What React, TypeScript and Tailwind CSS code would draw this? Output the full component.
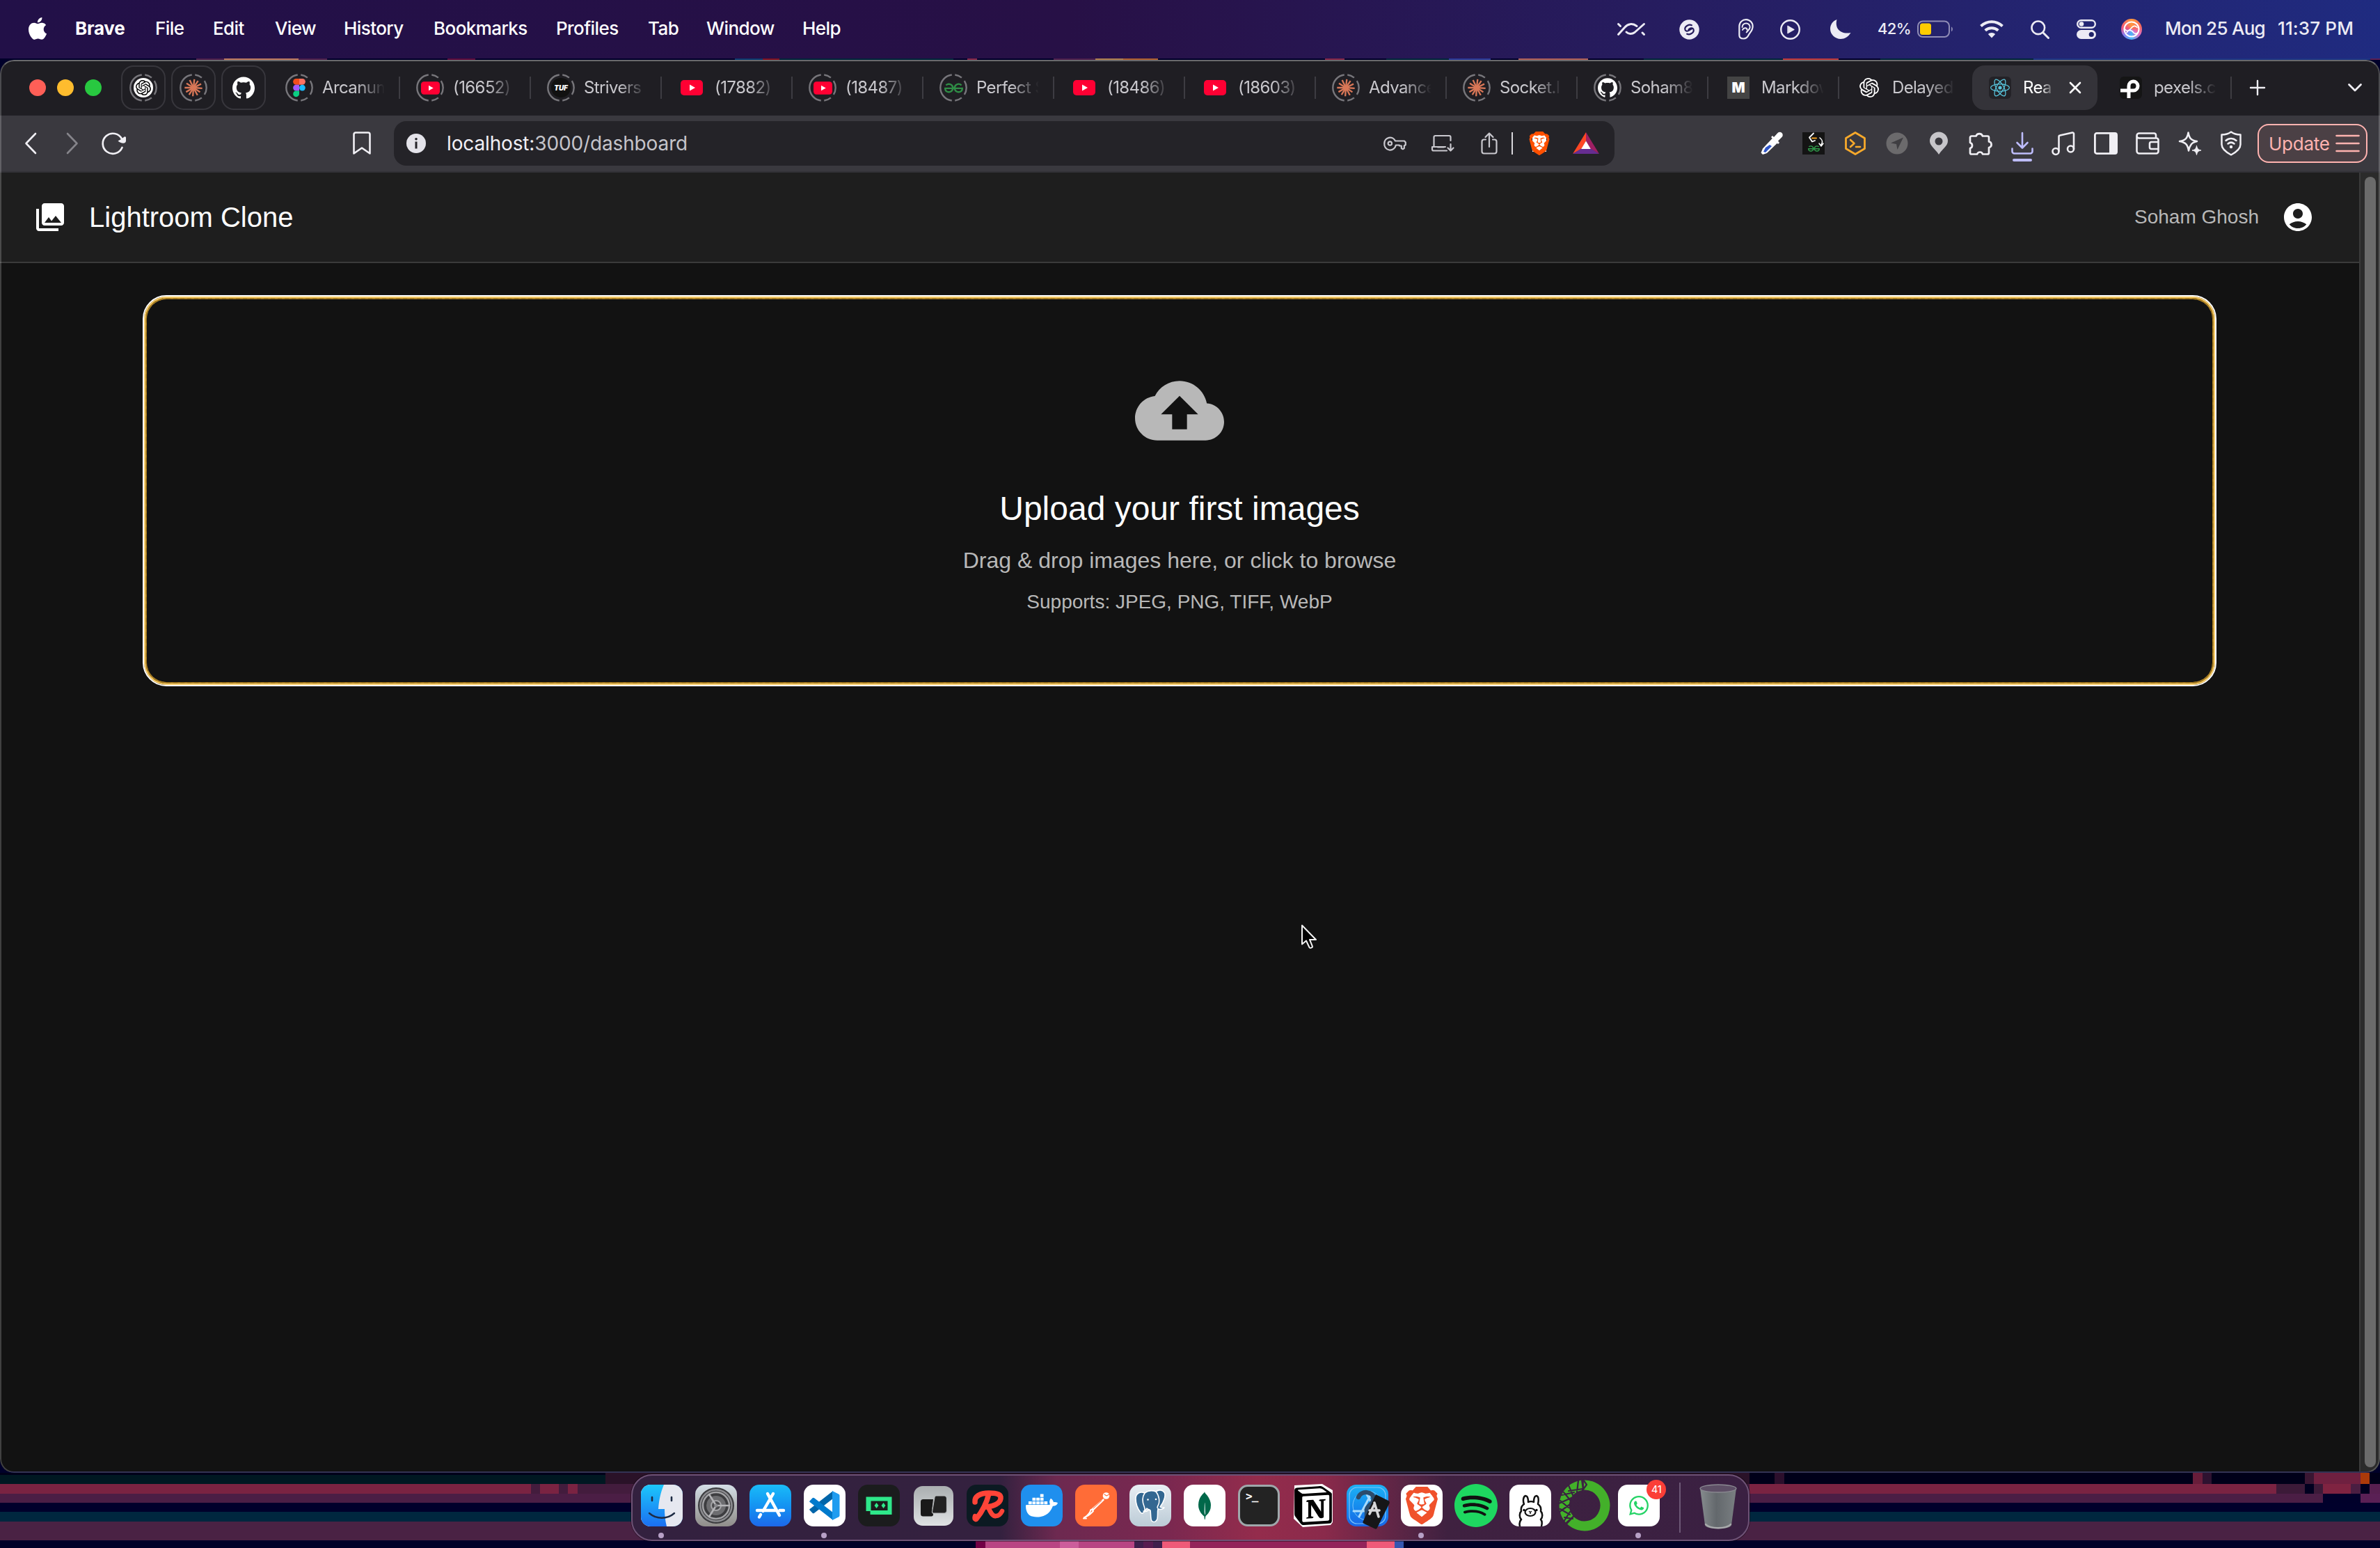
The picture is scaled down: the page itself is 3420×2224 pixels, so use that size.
import type { ReactNode } from "react";
import {
  SiOpenai,
  SiGithub,
  SiBrave,
  SiDocker,
  SiMongodb,
  SiNotion,
  SiSpotify,
  SiWhatsapp,
  SiGeeksforgeeks,
  SiReact,
} from "react-icons/si";

type SvgProps = { box: string; className: string; children: ReactNode };

function Svg({ box, className, children }: SvgProps) {
  return (
    <svg viewBox={box} className={`block shrink-0 overflow-visible ${className}`} fill="none" strokeLinecap="round" strokeLinejoin="round">
      {children}
    </svg>
  );
}

/* ---------- small brand marks ---------- */

function Claude({ className }: { className: string }) {
  const rays = [
    [0, 15], [28, 14.5], [58, 15], [88, 15.5], [118, 14], [146, 15], [178, 15], [206, 14.5], [234, 15], [264, 15.5], [296, 14.5], [328, 15],
  ];
  return (
    <Svg box="-16 -16 32 32" className={className}>
      {rays.map(([a, l]) => (
        <line key={a} x1="0" y1="0" x2="0" y2={-l + 1} transform={`rotate(${a + 6})`} stroke="#d97757" strokeWidth="2.7" strokeLinecap="butt" />
      ))}
    </Svg>
  );
}

function YouTube({ className }: { className: string }) {
  return (
    <Svg box="0 0 32 22" className={className}>
      <rect width="32" height="22" rx="5" fill="#ff0033" />
      <path d="M13 6.5l8 4.5-8 4.5z" fill="#fff" />
    </Svg>
  );
}

function Figma() {
  return (
    <Svg box="0 0 18 26" className="h-[26px] w-[18px]">
      <path d="M4.5 0H9v8.7H4.5a4.35 4.35 0 010-8.7z" fill="#f24e1e" />
      <path d="M9 0h4.5a4.35 4.35 0 010 8.7H9z" fill="#ff7262" />
      <path d="M4.5 8.7H9v8.7H4.5a4.35 4.35 0 010-8.7z" fill="#a259ff" />
      <circle cx="13.4" cy="13.05" r="4.35" fill="#1abcfe" />
      <path d="M4.5 17.4H9v4.3a4.4 4.4 0 11-4.5-4.3z" fill="#0acf83" />
    </Svg>
  );
}

function Ring({ children }: { children: ReactNode }) {
  return (
    <div className="relative flex size-10 shrink-0 items-center justify-center">
      <svg viewBox="0 0 40 40" className="absolute inset-0 size-10" fill="none">
        <circle cx="20" cy="20" r="18.7" stroke="#77767b" strokeWidth="2.4" pathLength="100" strokeDasharray="0 2 9 5 18 5 9 4 46 2" transform="rotate(-90 20 20)" />
      </svg>
      {children}
    </div>
  );
}

/* ---------- menu bar ---------- */

const menus: [string, string][] = [
  ["File", "w-[83px]"],
  ["Edit", "w-[89px]"],
  ["View", "w-[99px]"],
  ["History", "w-[129px]"],
  ["Bookmarks", "w-[176px]"],
  ["Profiles", "w-[132px]"],
  ["Tab", "w-[84px]"],
  ["Window", "w-[138px]"],
  ["Help", "w-[60px]"],
];

function MenuBar() {
  return (
    <div className="flex h-[84px] items-center whitespace-nowrap bg-linear-to-r from-[#221048] via-[#271046] via-45% to-[#1f2b80] text-[26px] tracking-[-0.022em] text-white">
      <Svg box="0 0 814 1000" className="ml-[41px] mb-[3px] h-[32px] w-[26px]">
        <path
          fill="#fff"
          d="M788 341c-6 4-108 62-108 190 0 148 130 200 134 202-1 3-21 71-69 141-43 61-87 123-155 123s-86-40-164-40c-77 0-104 41-166 41s-106-57-156-127C46 790 0 663 0 542c0-194 126-297 251-297 66 0 121 43 163 43 39 0 101-46 176-46 29 0 131 3 198 99zM555 159c31-37 53-88 53-139 0-7-1-14-2-20-50 2-110 34-147 76-28 32-55 83-55 135 0 8 1 16 2 18 3 1 8 1 13 1 45 0 102-30 136-71z"
        />
      </Svg>
      <div className="-mt-[4px] -ml-[1px] flex">
        <span className="ml-[42px] w-[115px] font-bold tracking-[-0.01em]">Brave</span>
        {menus.map(([m, w]) => (
          <span key={m} className={`${w} font-medium`}>
            {m}
          </span>
        ))}
      </div>
      <div className="ml-auto flex w-[1096px] items-center text-[#ecebf4]">
        <Svg box="0 0 40 18" className="h-[18px] w-10">
          <path d="M1.500 16.500L11 6C15 1 22 0 28 4.500M13 13c3 3 8 3.500 12 .5L38.500 1.500M1.500 1.500l3 3M36 14l2.500 2.500" stroke="#ecebf4" strokeWidth="3" />
        </Svg>
        <Svg box="0 0 30 30" className="ml-[49px] size-[29px]">
          <circle cx="15" cy="15" r="14.700" fill="#ecebf4" />
          <path d="M18.500 8.500c-4-2-10 1.500-10 5.500 0 3 3 4.500 6.500 2l4-2.500M11.500 21.500c4 2 10-1.500 10-5.500 0-3-3-4.500-6.500-2l-1 .8" stroke="#231a5a" strokeWidth="2.200" />
        </Svg>
        <Svg box="0 0 22 30" className="ml-[56px] h-[30px] w-[22px]">
          <path d="M1.300 10.500a9.600 9.600 0 0119.300.5c0 6-4 8.500-6 12.500-1.500 3-3 5-7 5-5 0-6.300-2-6.300-5z" stroke="#ecebf4" strokeWidth="2.200" />
          <path d="M5.500 12a5.600 5.600 0 0111.200 0c0 3-3 4.500-5 7.500M6 16c1-3 6-4 6.500-.5" stroke="#ecebf4" strokeWidth="2" />
        </Svg>
        <Svg box="0 0 30 30" className="ml-[38px] size-[29px]">
          <circle cx="15" cy="15" r="13.700" stroke="#ecebf4" strokeWidth="2.500" />
          <path d="M11.500 9.500l9.500 5.500-9.500 5.500z" fill="#ecebf4" stroke="#ecebf4" />
        </Svg>
        <Svg box="0 0 30 28" className="ml-[43px] h-[28px] w-[30px]">
          <path d="M9.500 0C6 13 15 22 29.500 19 26 25 20.500 28 15 28 7 28 0 21.500 0 13.500 0 7 4 2 9.500 0z" fill="#ecebf4" />
        </Svg>
        <span className="-mt-[2px] ml-[38px] w-[57px] text-[22px] font-medium tracking-[-0.03em]">42%</span>
        <Svg box="0 0 52 26" className="h-[26px] w-[52px]">
          <rect x="1" y="1.500" width="45" height="22.500" rx="7" stroke="#8f8cb5" strokeWidth="2" />
          <path d="M49 9.500c2.500.8 2.500 6 0 6.800z" fill="#8f8cb5" />
          <rect x="4" y="4.500" width="16" height="16.500" rx="3.500" fill="#ffcc00" />
        </Svg>
        <Svg box="0 0 36 26" className="ml-[37px] h-[26px] w-9">
          <path d="M2.500 8.500C11.500.2 24.500.2 33.500 8.500M8.700 14.800c5.300-4.900 13.300-4.900 18.600 0" stroke="#ecebf4" strokeWidth="4" strokeLinecap="butt" />
          <path d="M18 25.500l-5.200-5.600c3-2.700 7.400-2.700 10.400 0z" fill="#ecebf4" />
        </Svg>
        <Svg box="0 0 27 27" className="ml-[38px] size-[27px]">
          <circle cx="10.800" cy="10.800" r="9.300" stroke="#ecebf4" strokeWidth="2.600" />
          <path d="M18 18l7.500 7.500" stroke="#ecebf4" strokeWidth="3" />
        </Svg>
        <Svg box="0 0 28 28" className="ml-[39px] size-7">
          <rect x="1.200" y="1.200" width="25.600" height="10.600" rx="5.300" stroke="#ecebf4" strokeWidth="2.400" />
          <circle cx="7" cy="6.500" r="3.300" fill="#ecebf4" />
          <rect y="15" width="28" height="13" rx="6.500" fill="#ecebf4" />
          <circle cx="21.300" cy="21.500" r="3.600" fill="#1f2368" />
        </Svg>
        <div className="ml-9 flex size-[30px] items-center justify-center rounded-full bg-[conic-gradient(#ff9a3c,#f76a5c_20%,#e070c8_35%,#4bb8f8_50%,#8a7cf0_65%,#f0567c_78%,#ff9a3c)]">
          <Svg box="0 0 30 30" className="size-[30px]">
            <circle cx="15" cy="15" r="10.500" stroke="#fff" strokeWidth="2" />
            <path d="M5.500 15c3 4 6 2 9-1.500 3-4 6-4 8.500-1M8 20c3-6 8-3 10 0 2 2 5 2 6.500-1" stroke="#fff" strokeWidth="1.600" />
          </Svg>
        </div>
        <span className="-mt-[4px] ml-[33px] w-[162px] font-medium tracking-[-0.028em]">Mon 25 Aug</span>
        <span className="-mt-[4px] font-medium tracking-[0.005em]">11:37 PM</span>
      </div>
    </div>
  );
}

/* Sliver of wallpaper between the menu bar and the window. */
function WallpaperTop() {
  return (
    <div className="flex h-[2px] bg-[#00002a]">
      <div className="ml-[282px] w-[40px] bg-[#4d1f4c]" />
      <div className="w-[107px] bg-[#c07a60]" />
      <div className="w-[41px] bg-[#4d1f4c]" />
      <div className="ml-[173px] w-[40px] bg-[#5d0a3c]" />
      <div className="ml-[373px] w-[40px] bg-[#0a3a70]" />
      <div className="w-[24px] bg-[#801020]" />
      <div className="w-[250px] bg-[#00263b]" />
      <div className="ml-[20px] w-[14px] bg-[#852548]" />
      <div className="ml-[110px] w-[60px] bg-[#4d1f4c]" />
      <div className="w-[40px] bg-[#b08050]" />
      <div className="w-[50px] bg-[#b06030]" />
      <div className="ml-[240px] w-[28px] bg-[#852548]" />
      <div className="ml-[60px] w-[90px] bg-[#00263b]" />
      <div className="w-[60px] bg-[#2a3a9a]" />
      <div className="ml-[40px] w-[100px] bg-[#b06058]" />
      <div className="ml-[80px] w-[200px] bg-[#00263b]" />
      <div className="w-[80px] bg-[#c0383a]" />
      <div className="ml-[60px] w-[220px] bg-[#00263b]" />
      <div className="flex-1 bg-[#1c3584]" />
      <div className="w-[14px] bg-[#5c2055]" />
    </div>
  );
}

/* ---------- tab strip ---------- */

function Pinned({ children }: { children: ReactNode }) {
  return <div className="flex size-16 shrink-0 items-center justify-center rounded-[18px] border-2 border-[#37363c]">{children}</div>;
}

function Tab({ icon, label, plain }: { icon: ReactNode; label: string; plain?: boolean }) {
  return (
    <div className="flex h-16 w-[188px] shrink-0 items-center">
      <div className="flex w-[86px] justify-center">{icon}</div>
      <div className="-ml-[10px] w-[90px] overflow-hidden whitespace-nowrap text-[24px] tracking-[-0.025em] text-[#c9c8cd] [mask-image:linear-gradient(to_right,#000_55%,transparent_100%)]">
        {label}
      </div>
      {!plain && <div className="ml-auto h-8 w-[2px] bg-[#3d3c42]" />}
    </div>
  );
}

const yt = <YouTube className="h-[22px] w-8" />;
const ytRing = (
  <Ring>
    <YouTube className="h-[19px] w-[27px]" />
  </Ring>
);
const claudeRing = (
  <Ring>
    <Claude className="size-7" />
  </Ring>
);

function TabStrip() {
  return (
    <div className="flex h-20 items-center bg-[#1f1e23]">
      <div className="ml-[42px] flex gap-4">
        <div className="size-6 rounded-full bg-[#ff5f57]" />
        <div className="size-6 rounded-full bg-[#febc2e]" />
        <div className="size-6 rounded-full bg-[#28c840]" />
      </div>
      <div className="mr-[5px] ml-7 flex gap-2">
        <Pinned>
          <Ring>
            <div className="flex size-7 items-center justify-center rounded-full bg-white">
              <SiOpenai className="size-[22px] text-black" />
            </div>
          </Ring>
        </Pinned>
        <Pinned>{claudeRing}</Pinned>
        <Pinned>
          <SiGithub className="size-8 text-white" />
        </Pinned>
      </div>
      <Tab icon={<Ring><Figma /></Ring>} label="Arcanum" />
      <Tab icon={ytRing} label="(16652)" />
      <Tab
        icon={
          <Ring>
            <div className="flex size-7 items-center justify-center rounded-full bg-[#111] text-[10px] font-black italic tracking-[-0.02em] text-white">TUF</div>
          </Ring>
        }
        label="Strivers"
      />
      <Tab icon={yt} label="(17882)" />
      <Tab icon={ytRing} label="(18487)" />
      <Tab icon={<Ring><SiGeeksforgeeks className="size-[27px] text-[#2f8d46]" /></Ring>} label="Perfect S" />
      <Tab icon={yt} label="(18486)" />
      <Tab icon={yt} label="(18603)" />
      <Tab icon={claudeRing} label="Advance" />
      <Tab icon={claudeRing} label="Socket.I" />
      <Tab icon={<Ring><SiGithub className="size-7 text-white" /></Ring>} label="Soham8" />
      <Tab icon={<div className="flex size-8 items-center justify-center bg-[#444] text-[20px] font-black text-white">M</div>} label="Markdow" />
      <Tab icon={<SiOpenai className="size-7 text-white" />} label="Delayed" plain />
      <div className="mr-[5px] ml-[3px] flex h-16 w-[180px] shrink-0 items-center rounded-[18px] bg-[#343339]">
        <div className="ml-6 flex size-8 items-center justify-center rounded-md bg-[#232227]">
          <SiReact className="size-[28px] text-[#58c4dc]" />
        </div>
        <div className="ml-[17px] w-[43px] overflow-hidden text-[24px] tracking-[-0.025em] text-white [mask-image:linear-gradient(to_right,#000_60%,transparent_105%)]">Rea</div>
        <Svg box="0 0 16 16" className="ml-[24px] size-4">
          <path d="M1 1l14 14M15 1L1 15" stroke="#fff" strokeWidth="2.600" />
        </Svg>
      </div>
      <Tab
        icon={
          <div className="flex size-8 items-center justify-center rounded-md bg-[#151515]">
            <Svg box="0 0 32 32" className="size-8">
              <path d="M13 31V13.500a6.500 6.500 0 117 6.500H1" stroke="#fff" strokeWidth="5" strokeLinecap="butt" strokeLinejoin="miter" />
            </Svg>
          </div>
        }
        label="pexels.co"
      />
      <Svg box="0 0 22 22" className="ml-[26px] size-[22px]">
        <path d="M11 1v20M1 11h20" stroke="#eeedf2" strokeWidth="2.400" />
      </Svg>
      <Svg box="0 0 20 12" className="ml-[119px] h-3 w-5">
        <path d="M1.500 1.500L10 10l8.500-8.500" stroke="#eeedf2" strokeWidth="2.800" />
      </Svg>
    </div>
  );
}

/* ---------- toolbar ---------- */

function Toolbar() {
  return (
    <div className="flex h-20 items-center bg-[#3a393f]">
      <Svg box="0 0 16 30" className="ml-9 h-[30px] w-4">
        <path d="M15 1L1.500 15 15 29" stroke="#f0eff4" strokeWidth="2.600" />
      </Svg>
      <Svg box="0 0 16 30" className="ml-11 h-[30px] w-4">
        <path d="M1 1l13.500 14L1 29" stroke="#85848a" strokeWidth="2.600" />
      </Svg>
      <Svg box="0 0 34 32" className="ml-[35px] h-8 w-[34px]">
        <path d="M28.500 22A14.500 14.500 0 1128 9.500" stroke="#f0eff4" strokeWidth="2.700" />
        <path d="M22.500 12.500c3 3 11 5.500 11.500 0V7.500c-1-2.500-3-1-6 2z" fill="#f0eff4" />
      </Svg>
      <Svg box="0 0 26 34" className="ml-[326px] h-[34px] w-[26px]">
        <path d="M1.500 4a2.500 2.500 0 012.500-2.500h18A2.500 2.500 0 0124.500 4v27.500L13 23.500 1.500 31.500z" stroke="#f0eff4" strokeWidth="2.600" />
      </Svg>
      <div className="ml-[33px] flex h-16 w-[1754px] shrink-0 items-center rounded-[18px] bg-[#242328] pr-[22px]">
        <div className="ml-[18px] flex size-7 items-center justify-center rounded-full bg-[#e4e3ea]">
          <Svg box="0 0 6 16" className="h-4 w-1.5">
            <rect x="1.500" y="5.500" width="3" height="10" fill="#242328" />
            <circle cx="3" cy="1.700" r="1.800" fill="#242328" />
          </Svg>
        </div>
        <div className="ml-[30px] text-[28px] tracking-[-0.005em] text-[#c5c4ca]">
          <span className="text-[#f1f0f5]">localhost:</span>3000/dashboard
        </div>
        <div className="ml-auto flex items-center">
          <Svg box="0 0 33 20" className="h-5 w-[33px]">
            <path d="M17 6.500h13l1.800 2V12l-2 1.500V17l-2 1.200-2-1.200v-3.500h-3V12.500h-5A8.200 8.200 0 111.300 10 8.200 8.200 0 0117 6.500z" stroke="#c9c8ce" strokeWidth="2.200" />
            <circle cx="9.300" cy="10" r="2.700" stroke="#c9c8ce" strokeWidth="2.200" />
          </Svg>
          <Svg box="0 0 33 24" className="ml-9 h-6 w-[33px]">
            <path d="M27.500 8V3a2 2 0 00-2-2H5.500a2 2 0 00-2 2v14H20M3.500 17H1v3.500a2 2 0 002 2h19M9 17.500h9M27.500 13v9M23.500 18.500l4 4 4-4" stroke="#c9c8ce" strokeWidth="2.200" />
          </Svg>
          <Svg box="0 0 24 32" className="ml-[38px] h-8 w-6">
            <path d="M7 10.500H4.500a3 3 0 00-3 3v14a3 3 0 003 3h15a3 3 0 003-3v-14a3 3 0 00-3-3H17M12 21V1.500M6.500 7L12 1.500 17.500 7" stroke="#c9c8ce" strokeWidth="2.200" />
          </Svg>
          <div className="ml-5 h-8 w-[2px] bg-[#d8d7dc]" />
          <div className="relative ml-[21px] flex h-9 w-[34px] items-center justify-center">
            <div className="absolute h-6 w-5 bg-white" />
            <SiBrave className="relative size-9 text-[#ff5000]" />
          </div>
          <Svg box="0 0 38 32" className="ml-[31px] h-8 w-[38px]">
            <path d="M19 0v12.500l-6 11L0 31z" fill="#ff4724" />
            <path d="M19 0v12.500l6 11L38 31z" fill="#9e1f63" />
            <path d="M0 31h38l-12-7.500H12z" fill="#662d91" />
            <path d="M19 12.500l-6.800 11.500h13.600z" fill="#fff" />
          </Svg>
        </div>
      </div>

      <Svg box="0 0 32 32" className="ml-[210px] size-8">
        <path d="M17 8.500l7 7L9 30l-6 2-2.500-2.500L3 23.500z" fill="#fff" />
        <path d="M7 22l6-4 3 2-9 9-3-1z" fill="#2f55c8" />
        <path d="M15 7l10 10 2-2-2-2.500 5.500-5.500a4 4 0 00-6-6L19 7l-2-2z" fill="#fff" />
      </Svg>
      <div className="ml-7 flex size-8 flex-col items-center bg-[#141414]">
        <Svg box="0 0 32 17" className="h-[17px] w-8">
          <path d="M16 1.500l-6 6 4 6 4-1.500" stroke="#fff" strokeWidth="1.800" />
          <path d="M14 8.500h6" stroke="#f0a020" strokeWidth="2" />
          <path d="M25 8c4 3 4 7 2 10M24 16l3 4 3-4" stroke="#fff" strokeWidth="1.500" />
        </Svg>
        <SiGeeksforgeeks className="size-[19px] -mt-[2px] text-[#2f9d4a]" />
      </div>
      <Svg box="0 0 34 36" className="ml-[27px] h-9 w-[34px]">
        <path d="M17 2.500l13.500 8v15L17 33.500l-13.500-8v-15z" stroke="#f7a92b" strokeWidth="2.800" />
        <path d="M10 13l5.500 5-5.500 5M18 23h6" stroke="#f7a92b" strokeWidth="2.600" />
      </Svg>
      <Svg box="0 0 32 32" className="ml-[27px] size-8">
        <circle cx="16" cy="16" r="15.500" fill="#6b6a6c" />
        <path d="M25 7.500L7 15.500l8 1.500 1.500 8z" fill="#3f3e42" />
      </Svg>
      <Svg box="0 0 28 32" className="ml-[30px] h-8 w-7">
        <path d="M14 32C8 23 1 19.500 1 12.500a13 13 0 0126 0C27 19.500 20 23 14 32z" fill="#c6c5c9" />
        <circle cx="14" cy="13" r="5.500" fill="#3a393f" />
      </Svg>
      <Svg box="0 0 36 34" className="ml-7 h-[34px] w-9">
        <path d="M11.500 6.500a5 5 0 019.500 0H28a2 2 0 012 2v6c4.500.5 5 7.500 0 8.500v7.500a2 2 0 01-2 2h-7c-1-4-6.500-4-8 0H5a2 2 0 01-2-2V24c4-1 4-7 0-8V8.500a2 2 0 012-2z" stroke="#f0eff4" strokeWidth="2.700" />
      </Svg>
      <div className="relative ml-[26px] size-8">
        <Svg box="0 0 32 32" className="size-8">
          <path d="M16 1v21M8.500 15l7.500 7.500 7.500-7.500M1.500 23.500v4a3 3 0 003 3h23a3 3 0 003-3v-4" stroke="#bdbcfb" strokeWidth="2.600" />
        </Svg>
        <div className="absolute top-[38px] left-[2px] h-1 w-7 rounded-full bg-[#bdbcfb]" />
      </div>
      <Svg box="0 0 36 36" className="ml-[26px] size-9">
        <ellipse cx="6" cy="29.500" rx="4.500" ry="4.500" stroke="#f0eff4" strokeWidth="2.600" />
        <ellipse cx="27.500" cy="26" rx="4.500" ry="4.500" stroke="#f0eff4" strokeWidth="2.600" />
        <path d="M10.500 29V8.500a2 2 0 011.700-2L30 2.500a1.700 1.700 0 012 1.700V26" stroke="#f0eff4" strokeWidth="2.600" />
      </Svg>
      <Svg box="0 0 34 32" className="ml-[25px] h-8 w-[34px]">
        <rect x="1.400" y="1.400" width="31.200" height="29.200" rx="2.500" stroke="#f0eff4" strokeWidth="2.800" />
        <rect x="22" y="1.500" width="10.500" height="29" fill="#f0eff4" />
      </Svg>
      <Svg box="0 0 34 32" className="ml-[26px] h-8 w-[34px]">
        <path d="M29 8.500V4a2.500 2.500 0 00-2.500-2.500H5a3.500 3.500 0 000 7h24.500A3 3 0 0132.500 11v16.500a3 3 0 01-3 3H5a3.500 3.500 0 01-3.500-3.500V5M32 14H22.500a2.500 2.500 0 00-2.500 2.500v5a2.500 2.500 0 002.500 2.500H32" stroke="#f0eff4" strokeWidth="2.600" />
      </Svg>
      <Svg box="0 0 36 36" className="ml-[26px] size-9">
        <path d="M15.500 2.500c1.500 8.500 4 11 12.500 12.500-5 1.500-6 1.500-8 4s-3 5-4 9.500c-1.500-9-4.500-12-13-13.500 8.500-1.500 11-4 12.500-12.500z" stroke="#f0eff4" strokeWidth="2.500" />
        <path d="M27.500 21.500c1 4.500 2 5.500 6.500 6.500-4.500 1-5.500 2-6.500 6.500-1-4.500-2-5.500-6.500-6.500 4.500-1 5.500-2 6.500-6.500z" fill="#f0eff4" stroke="#f0eff4" strokeWidth="1" />
      </Svg>
      <Svg box="0 0 30 36" className="ml-[26px] h-9 w-[30px]">
        <path d="M15 1.500c4 3 8 4 13.500 4v14c0 7-7 11.500-13.500 15C8.500 31 1.500 26.500 1.500 19.500v-14C7 5.500 11 4.500 15 1.500z" stroke="#f0eff4" strokeWidth="2.500" />
        <path d="M7.500 14c4.500-4 10.500-4 15 0M10.500 18.500c3-2.500 6-2.500 9 0" stroke="#f0eff4" strokeWidth="2.500" />
        <circle cx="15" cy="23" r="2.200" fill="#f0eff4" />
      </Svg>
      <div className="ml-[23px] flex h-14 w-[158px] shrink-0 items-center rounded-[16px] border-2 border-[#ffb3b0] bg-[#4b4045]">
        <span className="ml-[14px] w-[96px] text-[26px] tracking-[-0.01em] text-[#ffb3b0]">Update</span>
        <Svg box="0 0 35 26" className="h-[26px] w-[35px]">
          <path d="M1.500 2h32M1.500 13h32M1.500 24h32" stroke="#ffb3b0" strokeWidth="2.600" />
        </Svg>
      </div>
    </div>
  );
}

/* ---------- web page ---------- */

function Page() {
  return (
    <div className="flex h-[1866px] bg-[#121212] font-['Liberation_Sans',Arial,sans-serif]">
      <div className="flex w-[3390px] flex-col">
        <header className="flex h-[130px] shrink-0 items-center border-b-2 border-[#3a3a3a] bg-[#1e1e1e] pr-16 pl-12 text-white">
          <Svg box="0 0 24 24" className="size-12">
            <path fill="#fff" d="M22 16V4c0-1.100-.9-2-2-2H8c-1.100 0-2 .9-2 2v12c0 1.100.9 2 2 2h12c1.100 0 2-.9 2-2zm-11-4l2.030 2.710L16 11l4 5H8l3-4zM2 6v14c0 1.100.9 2 2 2h14v-2H4V6H2z" />
          </Svg>
          <h1 className="ml-8 text-[40px]">Lightroom Clone</h1>
          <span className="ml-auto text-[28px] text-[#b8b8b8]">Soham Ghosh</span>
          <Svg box="0 0 24 24" className="ml-8 size-12">
            <path
              fill="#fff"
              d="M12 2C6.480 2 2 6.480 2 12s4.480 10 10 10 10-4.480 10-10S17.520 2 12 2zm0 4c1.930 0 3.500 1.570 3.500 3.500S13.930 13 12 13s-3.500-1.570-3.500-3.500S10.070 6 12 6zm0 14c-2.030 0-4.430-.82-6.140-2.880C7.550 15.800 9.680 15 12 15s4.450.8 6.140 2.120C16.430 19.180 14.030 20 12 20z"
            />
          </Svg>
        </header>
        <main className="mt-[46px] flex justify-center">
          <section className="relative flex h-[562px] w-[2980px] flex-col items-center rounded-[34px] border-2 border-white shadow-[inset_0_0_0_2px_#f9cf6e,inset_0_0_0_4px_#b08428]">
            <div className="absolute inset-[2px] rounded-[30px] border-2 border-dashed border-[#a37a20]" />
            <Svg box="0 0 24 24" className="mt-[100px] size-32">
              <path fill="#b8b8b8" d="M19.350 10.040C18.670 6.590 15.640 4 12 4 9.110 4 6.600 5.640 5.350 8.040 2.340 8.360 0 10.910 0 14c0 3.310 2.690 6 6 6h13c2.760 0 5-2.240 5-5 0-2.640-2.050-4.780-4.650-4.960zM14 13v4h-4v-4H7l5-5 5 5h-3z" />
            </Svg>
            <h2 className="mt-[45px] text-[48px] leading-[64px] text-white">Upload your first images</h2>
            <p className="mt-[18px] text-[32px] leading-[48px] text-[#b8b8b8]">Drag &amp; drop images here, or click to browse</p>
            <p className="mt-4 text-[28px] leading-10 text-[#b8b8b8]">Supports: JPEG, PNG, TIFF, WebP</p>
          </section>
        </main>
      </div>
      <div className="flex w-[30px] justify-center border-l-2 border-[#3b3b3b] bg-[#2b2b2b] pt-[6px]">
        <div className="h-[1854px] w-4 rounded-full bg-[#6b6b6b]" />
      </div>
    </div>
  );
}

/* ---------- wallpaper below the window ---------- */

function WallpaperBottom() {
  return (
    <div className="flex h-[108px] flex-col">
      <div className="flex h-[16px] bg-[#000019]">
        <div className="mt-[3px] w-[870px] bg-[#001822]" />
        <div className="w-[1644px] bg-[#2a1228]" />
        <div className="ml-9 w-[14px] bg-[#2c0f2c]" />
        <div className="ml-[587px] w-[14px] bg-[#681d3a]" />
        <div className="w-[13px] bg-[#2e1230]" />
        <div className="ml-[134px] w-[13px] bg-[#3a1632]" />
        <div className="w-[67px] bg-[#6f2040]" />
        <div className="w-[13px] bg-[#ab3a0a]" />
      </div>
      <div className="flex h-[14px] bg-[#00001f]">
        <div className="w-[763px] bg-[#7a2342]" />
        <div className="w-[13px] bg-[#431c3d]" />
        <div className="w-[27px] bg-[#7a2342]" />
        <div className="w-[13px] bg-[#431c3d]" />
        <div className="w-[14px] bg-[#7a2342]" />
        <div className="w-[1684px] bg-[#431c3d]" />
        <div className="w-[757px] bg-[#7a2342]" />
        <div className="w-[41px] bg-[#3c1a38]" />
        <div className="ml-[13px] w-[13px] bg-[#3c1a38]" />
        <div className="w-[40px] bg-[#7f2341]" />
        <div className="w-[14px] bg-[#4a1e42]" />
        <div className="ml-[13px] flex-1 bg-[#571f50]" />
      </div>
      <div className="flex h-[13px] justify-between bg-[#00002a]">
        <div className="w-[3338px] bg-[#4b1e45]" />
        <div className="w-7 bg-[#5a2055]" />
      </div>
      <div className="h-[13px] bg-[#00002b]" />
      <div className="h-[14px] bg-[#00273f]" />
      <div className="h-[27px] bg-[#4a2244]" />
      <div className="flex h-[11px] bg-[#000028]">
        <div className="ml-[1402px] w-[14px] bg-[#720045]" />
        <div className="w-[107px] bg-[#b84583]" />
        <div className="w-[27px] bg-[#cc5d9b]" />
        <div className="w-[80px] bg-[#b84583]" />
        <div className="w-[13px] bg-[#3f1f4c]" />
        <div className="w-[14px] bg-[#571c50]" />
        <div className="w-[13px] bg-[#3f1f4c]" />
        <div className="w-[40px] bg-[#ef5a78]" />
        <div className="w-[254px] bg-[#93235a]" />
        <div className="w-[40px] bg-[#ef5a78]" />
        <div className="w-[13px] bg-[#3556b0]" />
      </div>
    </div>
  );
}

/* ---------- dock ---------- */

function App60({ bg, children, running }: { bg: string; children?: ReactNode; running?: boolean }) {
  return (
    <div className="relative size-[60px] shrink-0">
      <div className={`flex size-[60px] items-center justify-center overflow-hidden rounded-[14px] ${bg}`}>{children}</div>
      {running && <div className="absolute top-[69px] left-[25px] size-2 rounded-full bg-[#b7a0c6]" />}
    </div>
  );
}

function Finder() {
  return (
    <Svg box="0 0 60 60" className="size-[60px]">
      <rect width="60" height="60" fill="#e6e8f0" />
      <path d="M0 0h33c-5 12-7 22-8 35h9c0 9 1 17 3 25H0z" fill="url(#finderBlue)" />
      <path d="M16 18v5M44 18v5" stroke="#1d2b44" strokeWidth="2.600" />
      <path d="M12 41c10 9 26 9 36 0" stroke="#1d2b44" strokeWidth="2.400" />
      <defs>
        <linearGradient id="finderBlue" x1="0" y1="0" x2="0" y2="1">
          <stop stopColor="#1cc7fb" />
          <stop offset="1" stopColor="#1b6ff2" />
        </linearGradient>
      </defs>
    </Svg>
  );
}

function Settings() {
  return (
    <Svg box="0 0 60 60" className="size-[60px]">
      <circle cx="30" cy="30" r="26" fill="#3d3d40" />
      <circle cx="30" cy="30" r="22.500" stroke="#8b8b8f" strokeWidth="2.600" strokeDasharray="1.500 1" />
      <circle cx="30" cy="30" r="19" stroke="#a3a3a6" strokeWidth="2.500" />
      <circle cx="30" cy="30" r="14" fill="#6d6d70" />
      <circle cx="30" cy="30" r="7" fill="#4a4a4d" stroke="#a3a3a6" strokeWidth="2" />
      <path d="M33 30h16M28.500 27.500L20 14M28.500 32.500L20 46" stroke="#b4b4b7" strokeWidth="2.600" />
      <circle cx="30" cy="30" r="2.600" fill="#8a8a8e" />
    </Svg>
  );
}

function AppStore() {
  return (
    <Svg box="0 0 60 60" className="size-[60px]">
      <path d="M26 13l17 31M34 13L19.500 38M11 37h26M43.500 37H49M16 43l-2 3.500" stroke="#fff" strokeWidth="4.400" />
    </Svg>
  );
}

function VsCode() {
  return (
    <Svg box="0 0 60 60" className="size-[60px]">
      <path d="M8.500 36.500l4 4.200c.8.700 1.800.7 2.600 0L42 20V9L10 34c-2 1-2 1.800-1.500 2.500z" fill="#0065a9" />
      <path d="M8.500 23.500l4-4.200c.8-.7 1.800-.7 2.600 0L42 40v11L10 26c-2-1-2-1.800-1.500-2.500z" fill="#007acc" />
      <path d="M41 9l9 4.500c1 .5 1.500 1.300 1.500 2.500v28c0 1.200-.5 2-1.500 2.500L41 51z" fill="#1f9cf0" />
    </Svg>
  );
}

function RedBrush() {
  return (
    <Svg box="0 0 60 60" className="size-[60px]">
      <path d="M12 25c-1-8 7-13 20-13 12 0 18 2 17 8-1 7-10 11-20 12M32 13c-3 12-8 24-18 36" stroke="#ff4438" strokeWidth="7.500" />
      <path d="M31 32c3 8 7 14 11 13 4 0 7-3 9-7M12 45c-1 3-1 4 1 5" stroke="#ff4438" strokeWidth="6.500" />
    </Svg>
  );
}

function Elephant() {
  return (
    <Svg box="0 0 60 60" className="size-[60px]">
      <path
        d="M22 12c-7-3-13 1-13 8 0 7 3 15 7 20 2 2 4 1 5-1l4-5c2 2 4 2 5 3 1 5 0 12 2 15 3 3 7 1 8-3 1-5 0-10 1-14 4 1 8 0 9-2-3 0-5 0-6-1 5-6 9-17 6-21-3-4-8-4-12-1-5-2-11-2-16 2z"
        fill="#336791"
        stroke="#fff"
        strokeWidth="1.600"
      />
      <path d="M22 12c-4 6-3 14-1 19 1 3 2 5 0 8M38 10c5 6 6 15 3 20-1 3-2 3 0 4M28 36c-2 2-5 3-8 2" stroke="#fff" strokeWidth="1.600" />
      <circle cx="26.500" cy="21.500" r="1.300" fill="#fff" />
      <circle cx="38" cy="21" r="1.300" fill="#fff" />
    </Svg>
  );
}

function Postman() {
  return (
    <Svg box="0 0 60 60" className="size-[60px]">
      <circle cx="44.500" cy="16" r="4.800" fill="#fff" />
      <path d="M40.500 20L23 35c0 2 1 3 2.500 3L42 22z" fill="#fff" />
      <path d="M38 23L26 34" stroke="#ff6c37" strokeWidth="1" />
      <path d="M22.500 36c-1 4-4 8-9 11M26 38c-3 3-6 7-13 9M12 48.500h4" stroke="#fff" strokeWidth="2" />
      <path d="M42 14l3 2 4-2" stroke="#ff6c37" strokeWidth="1.200" />
    </Svg>
  );
}

function Ollama() {
  return (
    <Svg box="0 0 60 60" className="size-[60px]">
      <path d="M15 60c-1-4 0-8 2-10-3-3-3-9 0-12-1-5 1-8 4-10-2-5-1-11 2-12 3 0 4 5 4 9 2-1 6-1 8 0 0-4 1-9 4-9 3 1 3 7 2 12 3 2 5 5 4 10 3 3 3 9 0 12 2 2 2 6 1 10" stroke="#111" strokeWidth="2.500" />
      <ellipse cx="30" cy="39.500" rx="7.500" ry="5.500" stroke="#111" strokeWidth="2.200" />
      <path d="M28.500 38.500l1.500 1 1.500-1M30 39.500v2" stroke="#111" strokeWidth="1.500" />
      <circle cx="21" cy="36.500" r="1.700" fill="#111" />
      <circle cx="39" cy="36.500" r="1.700" fill="#111" />
    </Svg>
  );
}

function Anaconda() {
  return (
    <div className="relative size-[60px] shrink-0">
      <Svg box="0 0 74 74" className="absolute -top-[7px] -left-[7px] size-[74px]">
        <path d="M36 7.500A29.500 29.500 0 1117 58.700" stroke="#43b02a" strokeWidth="14" strokeLinecap="butt" />
        <path d="M33 7.800A29.500 29.500 0 0015 56.500" stroke="#43b02a" strokeWidth="14" strokeLinecap="butt" />
        <path d="M35 0l5 7-6 8M28 1l-2 17M34 13L14 16M14 8l6 14M22 18L4 22M7 18l10 12M18 26L0 34M2 30l12 10M15 36L1 46M2 42l14 8M16 46L7 60M20 56l-12-2" stroke="#3a2042" strokeWidth="2.200" />
      </Svg>
    </div>
  );
}

function Trash() {
  return (
    <Svg box="0 0 54 66" className="-mt-px ml-[27px] h-[66px] w-[54px]">
      <path d="M1 6l7 53c1 7 37 7 38 0l7-53z" fill="url(#bin)" />
      <ellipse cx="27" cy="6.500" rx="26" ry="5.500" fill="#5e4f66" stroke="#8b8a92" strokeWidth="1.300" />
      <path d="M9 58c6 7 30 7 36 0" stroke="#a9aaac" strokeWidth="2.500" />
      <defs>
        <linearGradient id="bin">
          <stop stopColor="#868b8e" />
          <stop offset=".45" stopColor="#63686c" />
          <stop offset="1" stopColor="#7a7f82" />
        </linearGradient>
      </defs>
    </Svg>
  );
}

function Dock() {
  return (
    <div className="absolute top-[2118px] left-[907px] flex h-24 w-[1607px] rounded-[30px] border-2 border-[#6e5276] bg-[linear-gradient(to_right,#33213f_0%,#34213f_33%,#6d2950_38%,#7a2850_48%,#942c4c_56%,#8a2a4b_62%,#5a2545_69%,#3f2140_73%,#3a2042_100%)] pt-[13px] pl-3 shadow-[0_0_0_1px_rgba(0,0,0,0.4)]">
      <div className="flex gap-[18px]">
        <App60 bg="bg-[#1ea0f5]" running><Finder /></App60>
        <App60 bg="bg-linear-to-b from-[#d5dfe7] to-[#908d8a]"><Settings /></App60>
        <App60 bg="bg-linear-to-b from-[#1bbcf8] to-[#1d68ea]"><AppStore /></App60>
        <App60 bg="bg-white" running><VsCode /></App60>
        <App60 bg="bg-[#1b1c1d]">
          <Svg box="0 0 60 60" className="size-[60px]">
            <path d="M11.500 17.500h37v25.500h-31v-5h-6z" fill="#2ee88a" />
            <rect x="18.500" y="23.500" width="24" height="13.500" fill="#1b1c1d" />
            <path d="M26.500 26l3 4-3 4-3-4zM36.500 26l3 4-3 4-3-4z" fill="#2ee88a" />
          </Svg>
        </App60>
        <App60 bg="">
          <div className="flex h-[57px] w-[57px] items-center justify-center rounded-[13px] bg-linear-to-b from-[#aaaeb0] to-[#dfe2e3]">
            <Svg box="0 0 57 57" className="size-[57px]">
              <path d="M13.500 19H28l-1.500 13 1.500 9c0 1.500-1 2.500-2.500 2.500h-12A3.500 3.500 0 0110 40V22.500a3.500 3.500 0 013.500-3.500z" fill="#191919" />
              <path d="M32 14h12a3.500 3.500 0 013.500 3.500v18A3.500 3.500 0 0144 39H28.500c-1.500 0-2.300-1-2-2.500L30 16c.2-1.200.8-2 2-2z" fill="#222" stroke="#b9bcbe" strokeWidth="1.200" />
            </Svg>
          </div>
        </App60>
        <App60 bg="bg-[#0c1a22]"><RedBrush /></App60>
        <App60 bg="bg-[#1f8fee]"><SiDocker className="size-[46px] text-white" /></App60>
        <App60 bg="bg-[#ff6c37]"><Postman /></App60>
        <App60 bg="bg-linear-to-b from-[#e9eff4] to-[#bccbd6]"><Elephant /></App60>
        <App60 bg="bg-white"><SiMongodb className="size-[40px] text-[#00684a]" /></App60>
        <App60 bg="border-[3px] border-[#9fa8ab] bg-[#232323]">
          <div className="flex size-full items-start pt-1 pl-2 font-['DejaVu_Sans_Mono',monospace] text-[16px] leading-5 font-bold tracking-[-0.05em] text-white">&gt;_</div>
        </App60>
        <div className="relative flex size-[60px] items-center justify-center">
          <Svg box="0 0 60 62" className="absolute -top-px size-[62px]">
            <path d="M3 2l40-2 15 9v46l-3 4-40 3L2 50z" fill="#fff" />
          </Svg>
          <SiNotion className="relative size-[56px] text-black" />
        </div>
        <div className="relative size-[60px]">
          <div className="size-[60px] rounded-[14px] bg-linear-to-b from-[#1fb2f5] to-[#1a66e6]" />
          <Svg box="0 0 60 60" className="absolute top-0 left-0 size-[60px]">
            <rect x="4" y="4" width="52" height="52" rx="11" stroke="#7cc4f8" strokeWidth="1.200" />
            <circle cx="30" cy="30" r="21" stroke="#7cc4f8" strokeWidth="1" />
            <path d="M29 14l18 32M35 14L18 46M10 38h30" stroke="#a8dafc" strokeWidth="3" />
            <path d="M17 18c4-10 21-9 22 2 0 9-10 9-10 17v11" stroke="#2c4b6b" strokeWidth="6.500" />
            <path d="M44 15l16 8c2 1 2 2 1.500 4L44 62c-1 2-2 2-4 1l-15-7c-2-1-2-2-1-4l17-36c1-2 2-2 3-1z" fill="#161618" />
            <path d="M33 37h14M40 26l6 20M40 28l-7 14" stroke="#d8d8da" strokeWidth="3.600" />
          </Svg>
        </div>
        <App60 bg="bg-white" running><SiBrave className="size-[54px] text-[#f0512b]" /></App60>
        <div className="relative flex size-[60px] items-center justify-center">
          <div className="absolute size-[48px] rounded-full bg-[#111]" />
          <SiSpotify className="relative size-[62px] shrink-0 text-[#1ed760]" />
        </div>
        <App60 bg="bg-white"><Ollama /></App60>
        <Anaconda />
        <div className="relative">
          <App60 bg="bg-white" running><SiWhatsapp className="size-7 text-[#25d366]" /></App60>
          <div className="absolute -top-[7px] left-[41px] flex size-7 items-center justify-center rounded-full bg-[#fb3e37] text-[15px] tracking-[-0.03em] text-white">41</div>
        </div>
      </div>
      <div className="-mt-[3px] ml-7 h-[72px] w-[2px] bg-[#6d5876]" />
      <Trash />
    </div>
  );
}

function Cursor() {
  return (
    <Svg box="0 0 24 38" className="absolute top-[1327px] left-[1869px] h-[38px] w-6">
      <path d="M2 2.500v27l6-5 4.500 9.500c1 1.800 5 .5 4.300-1.700L13 23h9z" fill="#000" stroke="#f4f4f4" strokeWidth="2" />
    </Svg>
  );
}

export default function App() {
  return (
    <div className="relative h-[2224px] w-[3420px] overflow-hidden bg-[#00002a] font-[Inter,'Liberation_Sans',sans-serif]">
      <MenuBar />
      <WallpaperTop />
      <div className="relative h-[2030px] overflow-hidden rounded-[20px]">
        <TabStrip />
        <Toolbar />
        <div className="h-[2px] bg-[#323137]" />
        <Page />
        <div className="pointer-events-none absolute inset-0 rounded-[20px] border-2 border-[#ffffff33] border-t-[#ffffff55]" />
      </div>
      <WallpaperBottom />
      <Dock />
      <Cursor />
    </div>
  );
}
